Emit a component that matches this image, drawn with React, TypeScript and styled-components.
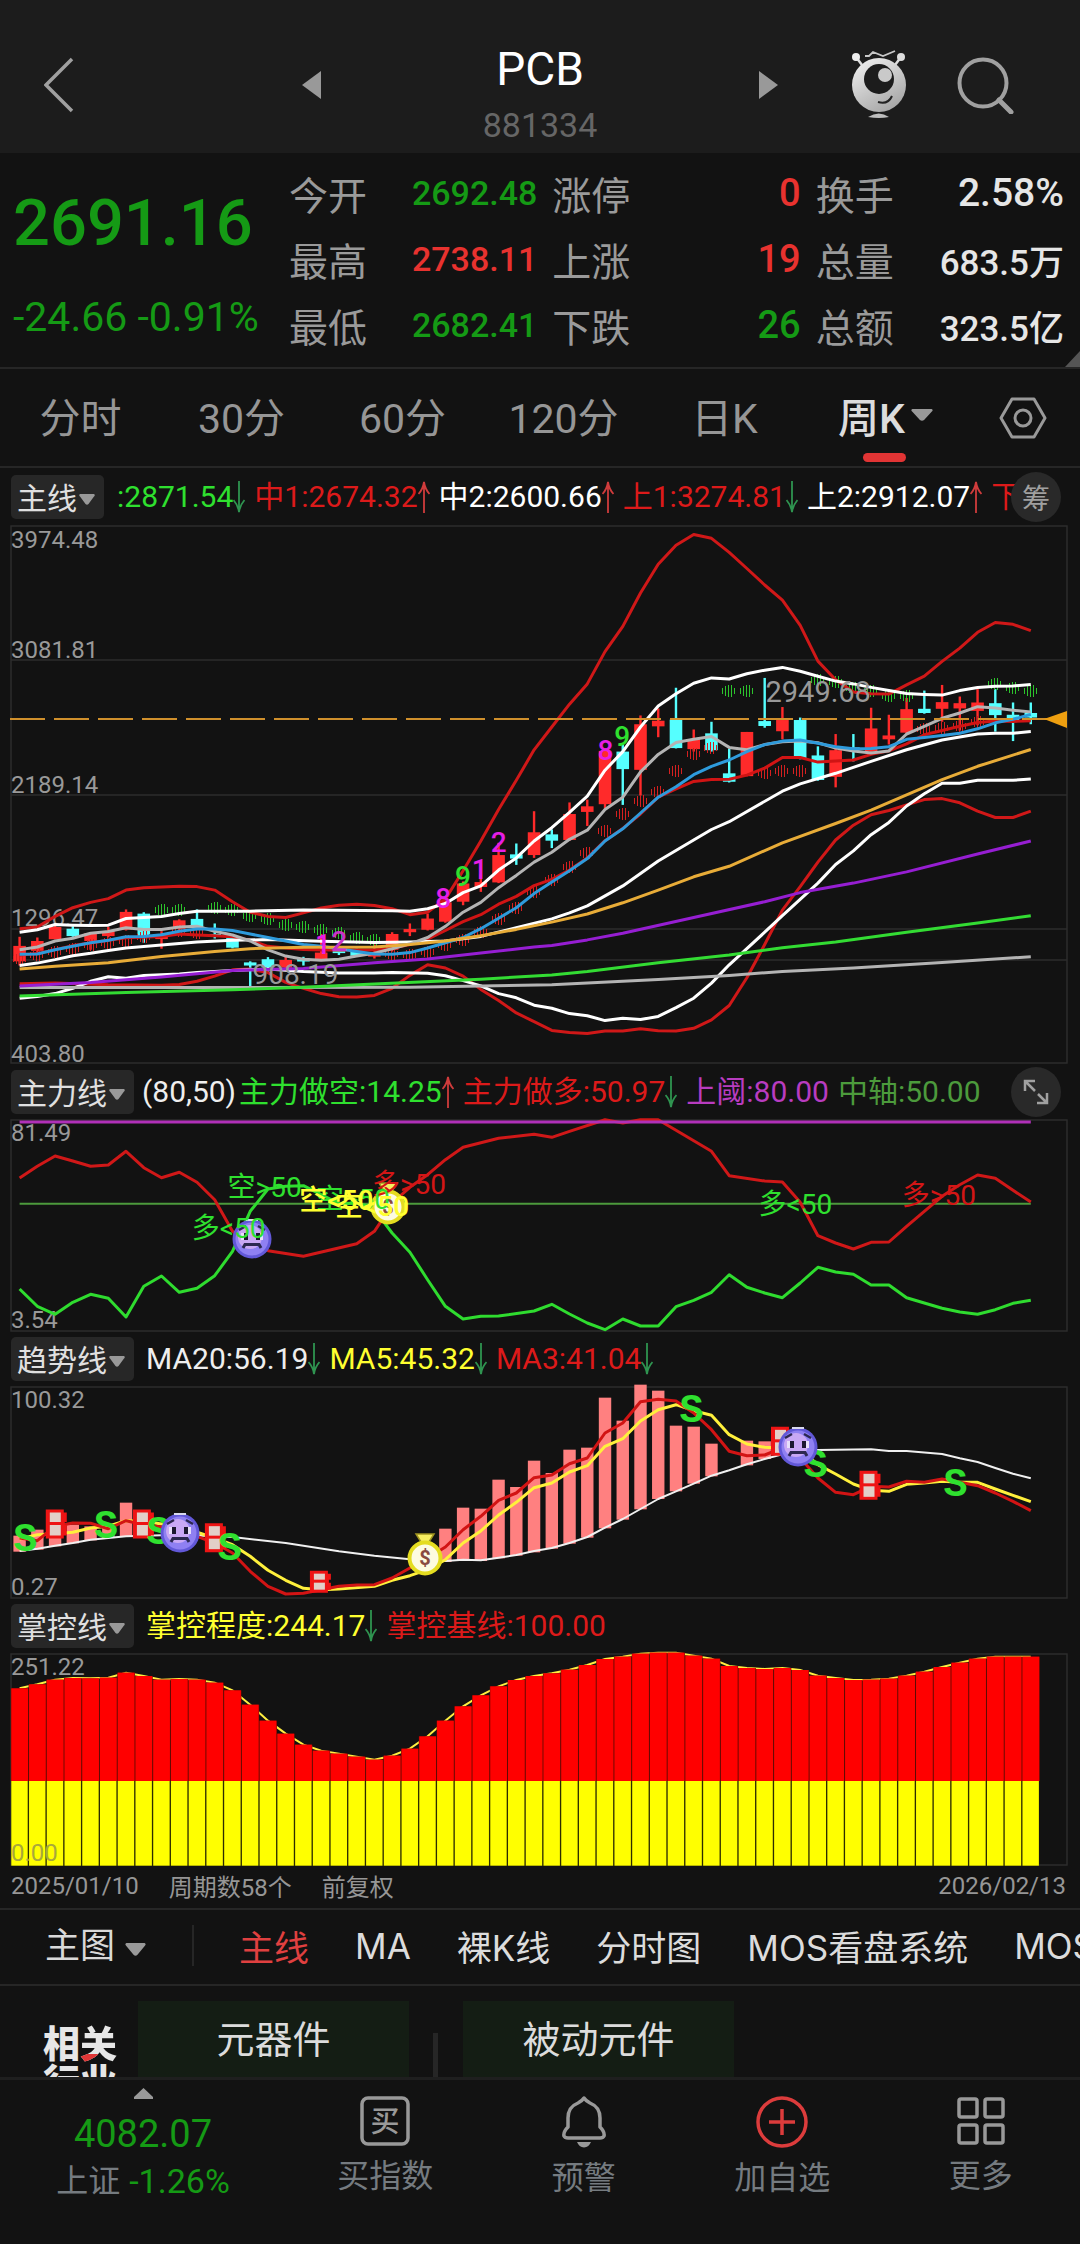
import React from "react";
import styled, { createGlobalStyle } from "styled-components";

const GlobalStyle = createGlobalStyle`
  * { box-sizing: border-box; }
  body {
    margin: 0;
    background: #121212;
    color: #d9d9d9;
    font-family: Roboto, "Noto Sans CJK SC", sans-serif;
    overflow-x: hidden;
  }
  button {
    margin: 0; padding: 0; border: 0; background: none;
    color: inherit; font: inherit; cursor: pointer;
  }
  svg { display: block; }
`;

const GREEN = "#159a15";
const RED = "#e8322f";
const WHITE = "#e6e6e6";

/* ---------- header ---------- */

const Page = styled.main`
  min-height: 100vh;
  display: flex;
  flex-direction: column;
  overflow: hidden;
`;

const TopBar = styled.header`
  height: 153px;
  padding: 17px 66px 0 44px;
  background: #1c1c1c;
  display: grid;
  grid-template-columns: 1fr 476px 1fr;
  align-items: center;
`;

const Switcher = styled.div`
  display: flex;
  justify-content: space-between;
  align-items: center;
  margin-left: 11px;
  margin-right: -11px;
`;

const Title = styled.h1`
  margin: 0;
  padding-top: 24px;
  display: flex;
  flex-direction: column;
  align-items: center;
  font-weight: 400;
  font-size: 46px;
  line-height: 56px;
  color: #fff;
`;

const Code = styled.small`
  font-size: 34px;
  color: #666;
`;

const Tools = styled.div`
  display: flex;
  justify-content: flex-end;
  align-items: center;
  gap: 50px;
`;

/* ---------- quote ---------- */

const Quote = styled.section`
  position: relative;
  height: 216px;
  padding: 7px 16px 0 13px;
  border-bottom: 2px solid #262626;
  display: grid;
  grid-template-columns: 261px repeat(3, 1fr);
  column-gap: 15px;
`;

const PriceBox = styled.div`
  padding-top: 16px;
  color: ${GREEN};
  white-space: nowrap;
`;

const Price = styled.div`
  font-size: 65px;
  line-height: 94px;
  font-weight: 500;
`;

const Change = styled.div`
  font-size: 41px;
  line-height: 94px;
`;

const StatList = styled.dl`
  margin: 0;
`;

const Stat = styled.div`
  height: 66px;
  display: flex;
  align-items: center;
  justify-content: space-between;
  white-space: nowrap;
`;

const StatName = styled.dt`
  font-size: 39px;
  color: #9a9a9a;
`;

const StatValue = styled.dd<{ $color: string; $size: number }>`
  margin: 0;
  font-size: ${(p) => p.$size}px;
  font-weight: 500;
  color: ${(p) => p.$color};
`;

const Corner = styled.svg`
  position: absolute;
  right: 0;
  bottom: 0;
`;

/* ---------- period tabs ---------- */

const Periods = styled.nav`
  height: 99px;
  display: flex;
  border-bottom: 2px solid #262626;
`;

const Period = styled.button<{ $on?: boolean }>`
  position: relative;
  flex: 1;
  padding-bottom: 5px;
  display: flex;
  align-items: center;
  justify-content: center;
  gap: 6px;
  font-size: 41px;
  color: ${(p) => (p.$on ? "#dcdcdc" : "#969696")};
  font-weight: ${(p) => (p.$on ? 500 : 400)};
  ${(p) =>
    p.$on &&
    `&::after {
      content: "";
      position: absolute;
      left: 50%;
      bottom: 4px;
      width: 43px;
      height: 9px;
      margin-left: -23px;
      border-radius: 5px;
      background: #e13434;
    }`}
`;

const Gear = styled.button`
  width: 114px;
  display: flex;
  align-items: center;
  justify-content: center;
`;

/* ---------- chart legends ---------- */

const Legend = styled.div<{ $h: number }>`
  height: ${(p) => p.$h}px;
  padding: 0 19px 0 11px;
  display: flex;
  align-items: center;
  gap: 8px;
`;

const Picker = styled.button`
  height: 44px;
  padding: 0 9px 2px 6px;
  flex: none;
  display: flex;
  align-items: center;
  gap: 2px;
  border-radius: 5px;
  background: #272727;
  font-size: 30px;
  color: #e0e0e0;
  & > svg { margin-top: 7px; }
`;

const Strip = styled.div<{ $pad?: number }>`
  flex: 1;
  min-width: 0;
  padding-left: ${(p) => p.$pad || 0}px;
  display: flex;
  align-items: center;
  gap: 9px;
  overflow: hidden;
  white-space: nowrap;
  font-size: 30px;
  line-height: 40px;
`;

const Reading = styled.span<{ $color: string }>`
  flex: none;
  display: flex;
  align-items: center;
  color: ${(p) => p.$color};
`;

const Params = styled.span`
  flex: none;
  margin-right: -6px;
  color: #eee;
`;

const Round = styled.button`
  width: 50px;
  height: 50px;
  flex: none;
  margin-left: -26px;
  position: relative;
  display: flex;
  align-items: center;
  justify-content: center;
  border-radius: 50%;
  background: #292929;
  font-size: 28px;
  color: #a0a0a0;
`;

const Plot = styled.svg`
  width: 100%;
  height: auto;
  overflow: visible;
`;

const Dates = styled.div`
  height: 43px;
  padding: 0 14px 2px 11px;
  display: flex;
  align-items: center;
  gap: 30px;
  font-size: 24px;
  color: #969696;
  & > :last-child { margin-left: auto; }
`;

/* ---------- indicator bar ---------- */

const Indicators = styled.nav`
  height: 78px;
  padding: 0 0 3px 45px;
  display: flex;
  align-items: center;
  border-top: 2px solid #262626;
  border-bottom: 2px solid #262626;
  font-family: Inter, "Noto Sans CJK SC", sans-serif;
  font-size: 35px;
  white-space: nowrap;
  overflow: hidden;
`;

const MainPick = styled.button`
  flex: none;
  display: flex;
  align-items: center;
  gap: 10px;
  padding-right: 46px;
  border-right: 2px solid #262626;
  margin-right: 45px;
  line-height: 41px;
  & > svg { margin-top: 7px; }
`;

const Choices = styled.div`
  display: flex;
  gap: 46px;
`;

const Choice = styled.button<{ $on?: boolean }>`
  flex: none;
  color: ${(p) => (p.$on ? "#e04040" : "#dcdcdc")};
`;

/* ---------- related sectors ---------- */

const Related = styled.section`
  height: 91px;
  padding: 15px 0 0 43px;
  display: flex;
  overflow: hidden;
`;

const RelatedTitle = styled.h2`
  margin: 0;
  width: 95px;
  padding-top: 26px;
  font-size: 37px;
  line-height: 38px;
  font-weight: 900;
  color: #e6e6e6;
`;

const Accent = styled.span`
  color: transparent;
  background:
    linear-gradient(115deg, #e03636 60%, transparent 60%) 0 30px / 24px 25px no-repeat,
    linear-gradient(#e6e6e6, #e6e6e6);
  -webkit-background-clip: text;
  background-clip: text;
`;

const Sector = styled.a`
  width: 271px;
  height: 120px;
  flex: none;
  padding-top: 10px;
  background: #141d14;
  color: #dcdcdc;
  font-size: 38px;
  line-height: 58px;
  text-align: center;
  text-decoration: none;
`;

const Split = styled.i`
  width: 5px;
  margin: 32px 25px 0 24px;
  background: #262626;
`;

/* ---------- bottom bar ---------- */

const BottomBar = styled.nav`
  flex: 1;
  min-height: 166px;
  border-top: 3px solid #1f1f1f;
  display: flex;
  align-items: flex-start;
`;

const IndexBox = styled.button`
  width: 286px;
  padding-top: 8px;
  display: flex;
  flex-direction: column;
  align-items: center;
`;

const IndexValue = styled.span`
  margin-top: 12px;
  font-size: 38px;
  line-height: 46px;
  color: ${GREEN};
`;

const IndexChange = styled.span`
  display: flex;
  gap: 9px;
  font-size: 34px;
  line-height: 48px;
  color: ${GREEN};
`;

const IndexName = styled.span`
  font-size: 32px;
  color: #757b80;
`;

const Action = styled.button`
  flex: 1;
  padding-top: 16px;
  display: flex;
  flex-direction: column;
  align-items: center;
  gap: 8px;
  font-size: 32px;
  line-height: 44px;
  color: #757b80;
`;

/* ---------- small drawings ---------- */

const Caret = ({ w = 16, h = 11 }: { w?: number; h?: number }) => (
  <svg width={w} height={h} viewBox="0 0 16 11" preserveAspectRatio="none">
    <path d="M1 0H15Q16.500 1 15 2.500L9.500 10Q8 11.500 6.500 10L1 2.500Q-0.500 1 1 0Z" fill="#999" />
  </svg>
);

const Arrow = ({ up }: { up?: boolean }) => (
  <svg width="12" height="34" viewBox="0 0 12 34" fill="none" stroke={up ? "#d03c3c" : "#2f9450"} strokeWidth="1.800">
    {up ? <path d="M6 33V2M0.500 14Q5 9 6 2Q7 9 11.500 14" /> : <path d="M6 1V32M0.500 20Q5 25 6 32Q7 25 11.500 20" />}
  </svg>
);

const Robot = () => (
  <svg width="56" height="70" viewBox="0 0 56 70">
    <defs>
      <linearGradient id="robot" x1="0" y1="0" x2="0.600" y2="1">
        <stop offset="0" stopColor="#f4f4f4" />
        <stop offset="1" stopColor="#a9a9a9" />
      </linearGradient>
    </defs>
    <path d="M14 6h4l4-4 10 4 12-5" fill="none" stroke="#c8c8c8" strokeWidth="1.800" />
    <path d="M5 7l6 8M50 7l-6 8" stroke="#ddd" strokeWidth="2.500" />
    <circle cx="5" cy="7" r="4" fill="#eee" />
    <circle cx="50" cy="7" r="4" fill="#ddd" />
    <circle cx="28" cy="35" r="27" fill="url(#robot)" />
    <circle cx="28" cy="29" r="15" fill="#1c1c1c" />
    <circle cx="34" cy="25" r="7" fill="#c9c9c9" />
    <path d="M27 52Q37 55 41 46" fill="none" stroke="#222" strokeWidth="2" />
    <path d="M17 67Q28 60 38 67Q28 69 17 67Z" fill="#bdbdbd" />
  </svg>
);

/* ---------- chart geometry ---------- */

const LEFT = 11;
const RIGHT = 1067;
const COUNT = 58;
const px = (i: number) => 19.6 + i * 17.74;
const lx = (u: number) => u / 2.904;

type Pt = [number, number];
type Scale = (v: number) => number;
const y1: Scale = (v) => (v - 14) / 2.851;
const y2: Scale = (v) => (v - 178) / 3;
const y3: Scale = (v) => (v - 169) / 3;
const y4: Scale = (v) => (v - 158) / 3;

const parse = (text: string): Pt[] =>
  text.trim().split(/\s+/).map((pair) => pair.split(":").map(Number) as Pt);

const Line = ({ data, y, color, width = 3 }: { data: string; y: Scale; color: string; width?: number }) => (
  <polyline
    fill="none"
    stroke={color}
    strokeWidth={width}
    strokeLinejoin="round"
    points={parse(data).map(([i, v]) => `${px(i).toFixed(1)},${y(v).toFixed(1)}`).join(" ")}
  />
);

const Frame = ({ h, lines = [] }: { h: number; lines?: number[] }) => (
  <g stroke="#2c2c2c" strokeWidth="1.500" fill="none">
    <rect x={LEFT} y="1" width={RIGHT - LEFT} height={h - 1} />
    {lines.map((y) => (
      <path key={y} d={`M${LEFT} ${y}H${RIGHT}`} />
    ))}
  </g>
);

const AxisText = ({ y, color = "#999", children }: { y: number; color?: string; children: string }) => (
  <text x="11" y={y} fontSize="24" fill={color}>{children}</text>
);

/* ---------- main chart data ---------- */

const upperRed = `0:1165 1:1160 2:1130 3:1105 4:1090 5:1079 6:1055 7:1048 8:1046 9:1044 10:1045 11:1055 12:1088 13:1118
14:1130 15:1133 16:1120 17:1106 18:1098 19:1095 20:1099 21:1108 22:1125 23:1118 24:1080 25:1000 26:915 27:825 28:742
29:655 30:590 31:525 32:467 33:375 34:303 35:208 36:126 37:72 38:41 39:52 40:92 41:138 42:185 43:228 44:300 45:402
46:455 47:490 48:495 49:496 50:470 51:445 52:403 53:365 54:320 55:292 56:297 57:315`;
const upperWhite = `0:1175 1:1168 2:1153 3:1155 4:1156 5:1155 6:1136 7:1133 8:1130 9:1122 10:1115 13:1115 16:1112 21:1114
22:1115 23:1108 24:1093 25:1062 26:1043 27:998 28:963 29:915 30:877 31:833 32:787 33:713 34:660 35:590 36:530 37:495
38:465 39:450 40:453 41:438 42:428 43:420 44:431 45:445 46:459 47:467 48:477 49:486 50:494 51:497 52:499 53:486
54:477 55:474 56:473 57:469`;
const grayLine = `0:1225 1:1217 2:1200 3:1192 4:1178 5:1173 6:1162 7:1167 8:1167 9:1160 10:1158 11:1172 12:1183 13:1200
14:1225 15:1243 16:1252 17:1255 18:1252 19:1243 20:1235 21:1222 22:1208 23:1190 24:1158 25:1118 26:1090 27:1048
28:1013 29:975 30:947 31:910 32:884 33:825 34:790 35:718 36:668 37:634 38:625 39:617 40:648 41:655 42:640 43:632
44:630 45:635 46:650 47:658 48:664 49:658 50:610 51:588 52:565 53:550 54:532 55:536 56:542 57:547`;
const blueLine = `0:1238 1:1237 2:1225 3:1215 4:1205 5:1198 6:1188 7:1187 8:1182 9:1172 10:1166 11:1166 12:1170 13:1180
14:1190 15:1200 16:1210 17:1215 18:1222 19:1230 20:1237 21:1238 22:1233 23:1220 24:1205 25:1190 26:1165 27:1135
28:1105 29:1065 30:1032 31:1000 32:965 33:915 34:880 35:835 36:790 37:760 38:726 39:702 40:684 41:660 42:640 43:630
44:627 45:636 46:646 47:652 48:651 49:646 50:625 51:620 52:614 53:608 54:595 55:578 56:568 57:554`;
const midRed = `0:1240 1:1236 3:1213 6:1191 8:1187 9:1180 10:1183 11:1185 12:1188 13:1198 14:1215 15:1220 16:1224 17:1226
20:1226 21:1221 22:1210 23:1195 24:1170 25:1145 26:1125 27:1095 28:1073 29:1042 30:1024 31:998 32:963 33:914 34:879
35:838 36:790 37:766 38:745 39:740 40:739 41:727 42:707 43:677 44:677 45:690 46:687 47:684 48:668 49:658 50:638
51:612 52:600 53:588 54:577 55:573 56:574 57:572`;
const midWhite = `0:1270 1:1263 2:1253 3:1242 4:1235 5:1227 6:1220 8:1211 10:1203 12:1198 14:1196 17:1201 20:1204 22:1203
24:1200 26:1187 28:1162 30:1137 31:1120 32:1100 34:1043 36:972 38:912 39:882 40:860 43:773 44:752 46:722 48:688
50:655 52:627 53:618 54:610 55:608 56:608 57:603`;
const orangeLine = `0:1280 2:1272 5:1262 8:1244 11:1230 13:1222 16:1218 20:1217 22:1210 24:1200 26:1185 28:1167 30:1146
32:1123 34:1091 36:1055 38:1017 40:987 43:920 46:865 48:827 52:740 54:702 57:654`;
const purpleLine = `0:1328 4:1318 8:1303 12:1284 16:1278 20:1262 23:1251 26:1234 29:1217 30:1213 32:1197 34:1178 38:1133
42:1088 44:1062 47:1035 50:1003 54:952 57:915`;
const greenLine = `0:1357 6:1347 12:1339 16:1332 20:1323 26:1309 30:1297 32:1287 36:1262 40:1240 43:1219 46:1203 50:1175
54:1149 57:1128`;
const longGray = `0:1333 10:1333 22:1332 26:1328 30:1325 36:1310 40:1298 43:1287 47:1277 52:1261 57:1245`;
const lowerWhite = `0:1363 1:1358 2:1350 3:1335 4:1315 5:1302 6:1306 7:1298 8:1296 9:1294 10:1290 12:1284 14:1280 16:1287
18:1291 20:1291 21:1290 23:1292 24:1299 25:1313 26:1328 27:1350 28:1362 29:1383 30:1392 31:1407 32:1413 33:1427
34:1420 35:1424 36:1415 37:1390 38:1363 39:1320 40:1268 42:1175 43:1128 45:1035 46:982 47:943 48:897 49:862 50:815
51:780 52:750 53:750 54:742 56:742 57:738`;
const lowerRed = `0:1322 2:1320 5:1325 8:1326 9:1324 10:1315 11:1300 12:1282 13:1280 14:1290 15:1318 16:1335 17:1350
18:1359 19:1360 20:1355 21:1335 22:1298 23:1268 24:1277 25:1300 26:1338 27:1370 28:1405 29:1430 30:1455 31:1461
32:1464 33:1457 34:1457 35:1450 36:1456 37:1457 38:1449 39:1425 40:1384 41:1305 42:1210 43:1112 44:1045 45:975
46:912 47:870 48:840 49:828 50:812 51:797 52:794 53:806 54:830 55:848 56:848 57:830`;

/* One row per week: r (up) or c (down), high, body top, body bottom, low. */
const candles = `r 1188 1214 1258 1270|r 1190 1200 1228 1232|r 1155 1160 1195 1195|c 1158 1165 1186 1188|r 1175 1178 1200 1225
|r 1160 1172 1186 1190|r 1110 1117 1168 1170|c 1118 1122 1190 1205|r 1172 1186 1189 1222|r 1138 1141 1165 1175
|c 1110 1137 1160 1162|c 1150 1180 1188 1193|c 1188 1190 1219 1221|c 1258 1261 1270 1338|c 1246 1252 1275 1290
|r 1240 1254 1276 1278|c 1245 1250 1258 1270|r 1180 1233 1254 1257|c 1220 1226 1232 1240|c 1222 1226 1242 1244
|r 1210 1236 1244 1250|r 1175 1180 1225 1230|r 1150 1166 1175 1186|r 1122 1136 1168 1170|r 1085 1090 1145 1148
|r 1030 1036 1088 1098|r 1010 1032 1046 1060|r 920 955 1033 1035|c 922 953 965 983|r 830 890 955 963
|c 882 896 914 935|r 805 838 912 914|r 797 816 832 872|r 650 658 810 822|c 640 660 710 812|r 557 582 712 785
|r 537 572 588 619|c 478 569 650 651|r 597 625 653 660|c 575 608 656 660|c 652 722 746 748|r 604 604 730 730
|c 450 573 587 592|r 533 570 602 625|c 563 570 678 682|c 645 671 741 743|r 610 656 732 762|c 610 648 656 688
|r 535 594 660 662|r 555 614 625 640|r 507 539 606 610|c 486 538 550 552|r 470 519 538 575|r 503 522 537 600
|r 482 520 544 585|c 482 522 556 603|c 520 555 572 630|c 520 550 563 582`
  .split("|")
  .map((row) => {
    const [kind, ...n] = row.trim().split(" ");
    return { up: kind === "r", n: n.map(Number) };
  });

const greenDots = `8:1112 9:1112 11:1105 12:1112 13:1130 14:1137 15:1153 16:1160 17:1168 18:1177 19:1192 20:1198 40:486
41:486 45:455 46:462 47:478 48:487 49:502 50:502 55:468 56:478 57:487`;
const redDots = `0:1250 1:1240 2:1232 3:1222 4:1212 5:1207 6:1200 7:1190 9:1172 10:1178 21:1238 22:1240 23:1230 24:1212
25:1197 26:1175 27:1137 28:1105 29:1060 30:1025 31:988 32:948 33:886 34:838 35:800 36:775 37:714 38:667 39:650 42:722
43:714 44:714 51:597 52:592 53:588 54:575`;

const stripes: Pt[] = [[-7, 3], [-4, 5], [-1, 6], [2, 6], [5, 3]];

const Dots = ({ data, color }: { data: string; color: string }) => (
  <path
    stroke={color}
    strokeWidth="1"
    d={parse(data)
      .map(([i, v]) =>
        stripes.map(([dx, r]) => `M${Math.round(px(i) + dx) + 0.5} ${Math.round(y1(v) - r)}v${r * 2}`).join("")
      )
      .join("")}
  />
);

const countdown: [string, number, number, string][] = [
  ["1", 915, 1238, "#e61ee6"],
  ["2", 962, 1228, "#c832c8"],
  ["8", 1264, 1106, "#e61ee6"],
  ["9", 1321, 1044, "#2fe02f"],
  ["1", 1370, 1022, "#e61ee6"],
  ["2", 1425, 945, "#e61ee6"],
  ["8", 1735, 684, "#e61ee6"],
  ["9", 1784, 645, "#2fe02f"],
];

const MainChart = () => (
  <Plot viewBox="0 0 1080 539">
    <Frame h={538} lines={[135, 270, 404, 435]} />
    <AxisText y={y1(80)}>3974.48</AxisText>
    <AxisText y={y1(393)}>3081.81</AxisText>
    <AxisText y={y1(777)}>2189.14</AxisText>
    <AxisText y={y1(1158)}>1296.47</AxisText>
    <AxisText y={y1(1545)}>403.80</AxisText>
    {candles.map(({ up, n }, i) => (
      <g key={i} fill={up ? "#ff2a2a" : "#55ffff"}>
        <rect x={px(i) - 1.2} y={y1(n[0])} width="2.400" height={(n[3] - n[0]) / 2.851} />
        <rect x={px(i) - 6.3} y={y1(n[1])} width="12.600" height={Math.max((n[2] - n[1]) / 2.851, 3)} />
      </g>
    ))}
    <Dots data={greenDots} color="#2cc42c" />
    <Dots data={redDots} color="#d42020" />
    <Line data={midRed} y={y1} color="#d01414" />
    <Line data={upperRed} y={y1} color="#d01818" />
    <Line data={lowerRed} y={y1} color="#d01818" />
    <Line data={upperWhite} y={y1} color="#fff" />
    <Line data={midWhite} y={y1} color="#fff" />
    <Line data={lowerWhite} y={y1} color="#fff" />
    <Line data={grayLine} y={y1} color="#b4b4b4" />
    <Line data={blueLine} y={y1} color="#2e9bdc" />
    <Line data={orangeLine} y={y1} color="#e8ac38" />
    <Line data={longGray} y={y1} color="#b4b4b4" />
    <Line data={purpleLine} y={y1} color="#961ed2" />
    <Line data={greenLine} y={y1} color="#33dc33" />
    <path d="M10 194H1040" stroke="#d0902c" strokeWidth="2" strokeDasharray="35 9" />
    <path d="M1025 194H1048" stroke="#d0902c" strokeWidth="2" />
    <path d="M1044 194L1067 186V203Z" fill="#ee9f10" />
    {countdown.map(([t, x, v, c]) => (
      <text key={`${t}${x}`} x={lx(x)} y={y1(v)} fontSize="28" fontWeight="500" fill={c}>{t}</text>
    ))}
    <text x={lx(733)} y={y1(1324)} fontSize="28" fill="#999">908.19</text>
    <text x={lx(2223)} y={y1(518)} fontSize="29" fill="#999">2949.68</text>
  </Plot>
);

/* ---------- force chart ---------- */

const forceRed = `0:355 1:320 2:289 3:304 4:320 5:316 6:275 7:324 8:354 9:338 10:368 11:420 12:515 13:555 14:573 16:590
19:552 20:515 20.5:475 21:430 22:383 23:345 24:300 25:263 27:236 29:224 30:233 31:215 33:180 34:190 35:180 36:180
37:212 39:275 40:348 42:364 43:367 44:428 45:528 46:550 47:568 48:548 49:547 50:500 51:455 52:410 53:375 54:346
55:356 56:392 57:427`;
const forceGreen = `0:688 1:740 2:764 3:728 4:704 5:716 6:772 7:680 8:649 9:698 10:686 11:648 12:575 13:455 14:388 15:380
16:378 17:405 18:432 19:430 20:445 20.5:485 21:520 22:578 23:660 24:740 25:778 26:770 27:769 29:754 30:734 31:763
32:790 33:810 34:778 35:799 36:799 37:741 38:722 39:698 40:645 41:683 42:700 43:714 44:670 45:623 46:637 47:644
48:676 49:676 50:714 51:730 52:746 53:757 54:764 55:750 56:731 57:722`;

const forceMarks: [string, number, number, string][] = [
  ["空>50", 661, 411, "#2fe02f"],
  ["多<50", 557, 535, "#2fe02f"],
  ["多>50", 1080, 403, "#d41616"],
  ["空>50", 917, 447, "#2fe02f"],
  ["空<50", 869, 452, "#ffff30"],
  ["空<50", 973, 468, "#ffff30"],
  ["多<50", 2203, 463, "#2fe02f"],
  ["多>50", 2619, 437, "#d41616"],
];

const Face = ({ x, y }: { x: number; y: number }) => (
  <g transform={`translate(${x} ${y})`}>
    <circle r="19.500" fill="#6258d8" />
    <circle r="16.500" fill="#8f80f2" />
    <circle cx="-2" cy="-2" r="12" fill="#c9a8f4" />
    <path d="M-6 -19H6" stroke="#d8d8ee" strokeWidth="2" />
    <path d="M-13 -9L-6 -13M13 -9L6 -13" stroke="#2c2850" strokeWidth="2.500" />
    <path d="M-9 -6V1M9 -6V1" stroke="#e8e0fa" strokeWidth="4" />
    <path d="M-6 -6V1M6 -6V1" stroke="#1c1830" strokeWidth="4" />
    <path d="M-9 9L-7 5.500H7L9 9" fill="none" stroke="#2c2850" strokeWidth="3" />
  </g>
);

const Coin = ({ x, y }: { x: number; y: number }) => (
  <g transform={`translate(${x} ${y})`}>
    <path d="M-9 -24H9L4 -16H-4Z" fill="#f6ee60" stroke="#a09420" strokeWidth="1.500" />
    <circle r="15.500" fill="#fdfbe0" stroke="#e4dc20" strokeWidth="4" />
    <text y="7" textAnchor="middle" fontSize="20" fontWeight="700" fill="#8a4a40">$</text>
  </g>
);

const ForceChart = () => (
  <Plot viewBox="0 0 1080 212">
    <Frame h={212} />
    <AxisText y={22}>81.49</AxisText>
    <AxisText y={209}>3.54</AxisText>
    <Line data="0:432 57:432" y={y2} color="#4c9a3c" width={2} />
    <Line data={forceRed} y={y2} color="#d01818" />
    <Line data={forceGreen} y={y2} color="#2fdc2f" />
    <Line data="0:187 57:187" y={y2} color="#b030b8" />
    <Face x={252} y={120} />
    <Coin x={388} y={88} />
    {forceMarks.map(([t, x, v, c]) => (
      <text key={`${t}${x}`} x={lx(x)} y={y2(v)} fontSize="28" fontWeight={c === "#ffff30" ? 500 : 400} fill={c}>{t}</text>
    ))}
  </Plot>
);

/* ---------- trend chart ---------- */

const trendBars = `0:618:666 1:600:660 2:572:650 3:585:641 4:590:632 5:582:625 6:519:620 7:562:620 24:597:697 25:534:694
26:537:694 27:450:686 28:472:678 29:393:668 30:430:657 31:360:642 32:354:624 33:204:596 34:273:570 35:165:539
36:183:508 37:288:485 38:291:462 39:342:440 41:333:407 42:335:388 43:330:378`
  .split(/\s+/)
  .map((t) => t.split(":").map(Number));
const trendWhite = `0:664 1:657 2:648 3:640 4:630 6:620 7:618 9:615 12:622 15:640 18:665 20:678 22:689 24:694 25:690 26:692
27:684 28:676 29:664 30:655 31:640 32:622 33:594 34:568 35:538 36:508 37:485 38:462 39:438 40:422 41:404 42:388
43:374 44:364 45:361 48:359 49:364 50:364 52:373 53:386 54:397 55:415 56:432 57:446`;
const trendYellow = `0:628 1:615 2:612 3:608 4:595 5:590 6:573 7:575 8:583 9:595 10:608 11:625 12:645 13:680 14:722 15:752
16:776 17:780 18:778 20:770 21:752 22:738 23:720 24:690 25:640 26:604 27:556 28:518 29:474 30:460 31:427 32:408
33:350 34:327 35:274 36:240 37:225 38:243 39:257 40:315 41:343 42:353 43:356 44:360 45:405 46:433 47:463 48:482
49:485 50:464 51:460 52:455 53:458 54:458 55:478 56:497 57:516`;
const trendRed = `0:625 1:633 2:590 3:580 4:581 5:597 6:573 7:585 8:592 9:600 10:620 11:640 12:670 13:725 14:770 15:793
16:791 17:780 18:770 19:766 20:765 21:745 22:715 23:685 24:652 25:600 26:560 27:512 28:490 29:444 30:436 31:402
32:385 33:310 34:280 35:216 36:209 37:214 38:250 39:300 40:365 41:378 42:376 43:355 44:385 45:445 46:488 47:495
48:470 49:472 50:455 51:458 52:448 53:458 54:468 55:490 56:515 57:543`;

const Sell = ({ x, v }: { x: number; v: number }) => (
  <text
    x={lx(x)}
    y={y3(v) + 14}
    textAnchor="middle"
    fontFamily="Liberation Mono, monospace"
    fontSize="40"
    fontWeight="700"
    fill="#2fe02f"
  >
    S
  </text>
);

const Buy = ({ x, v, h = 29 }: { x: number; v: number; h?: number }) => (
  <g transform={`translate(${lx(x) - 10} ${y3(v) - h / 2})`}>
    <path d={`M0 0H18V3H21V${h / 2 - 2}H19V${h / 2 + 1}H21V${h - 3}H18V${h}H0Z`} fill="#ee1414" />
    <rect x="4" y="3" width="11" height={h / 2 - 5} fill="#e2cfc8" />
    <rect x="4" y={h / 2 + 1} width="11" height={h / 2 - 4} fill="#e2cfc8" />
  </g>
);

const TrendChart = () => (
  <Plot viewBox="0 0 1080 212">
    <Frame h={212} />
    <AxisText y={22}>100.32</AxisText>
    <AxisText y={209}>0.27</AxisText>
    {trendBars.map(([i, a, b]) => (
      <rect key={i} x={px(i) - 6.2} y={y3(a)} width="12.400" height={(b - a) / 3} fill="#ff8080" />
    ))}
    <Line data={trendWhite} y={y3} color="#f0f0f0" width={2} />
    <Line data={trendYellow} y={y3} color="#fff03c" />
    <Line data={trendRed} y={y3} color="#d21414" />
    <Buy x={162} v={583} />
    <Buy x={415} v={583} />
    <Buy x={624} v={624} />
    <Buy x={929} v={756} h={22} />
    <Buy x={2268} v={335} />
    <Buy x={2525} v={467} />
    <Sell x={73} v={622} />
    <Sell x={308} v={582} />
    <Sell x={460} v={600} />
    <Sell x={667} v={648} />
    <Sell x={2008} v={235} />
    <Sell x={2369} v={400} />
    <Sell x={2775} v={457} />
    <Face x={180} y={147} />
    <Face x={798} y={61} />
    <Coin x={425} y={172} />
  </Plot>
);

/* ---------- control chart ---------- */

const control = [
  264, 252, 238, 233, 234, 232, 217, 227, 238, 236, 238, 247, 270, 313, 361, 400, 433, 451, 460, 469, 478, 466, 445, 408,
  361, 318, 285, 258, 239, 227, 219, 208, 194, 176, 169, 160, 157, 157, 166, 175, 197, 203, 206, 203, 209, 226, 233, 239,
  238, 235, 226, 214, 200, 187, 175, 169, 169, 169,
];

const ControlChart = () => (
  <Plot viewBox="0 0 1080 212">
    <Frame h={212} />
    <rect x={LEFT} y={y4(542)} width={COUNT * 17.72} height={y4(796) - y4(542)} fill="#2c2c00" />
    <polyline
      fill="none"
      stroke="#ffee40"
      strokeWidth="2"
      points={control.map((v, i) => `${px(i)},${y4(v)}`).join(" ")}
    />
    {control.map((v, i) => (
      <g key={i}>
        <rect x={px(i) - 8.8} y={y4(v)} width="17.740" height={y4(542) - y4(v)} fill="#7a0a00" />
        <rect x={px(i) - 8.3} y={y4(v)} width="16.700" height={y4(542) - y4(v)} fill="#ff0000" />
        <rect x={px(i) - 8.3} y={y4(542)} width="16.400" height={y4(796) - y4(542)} fill="#ffff00" />
      </g>
    ))}
    <AxisText y={22}>251.22</AxisText>
    <AxisText y={208} color="#a8a83c">0.00</AxisText>
  </Plot>
);

/* ---------- page ---------- */

type StatRow = [string, string, string, number];
const stats: StatRow[][] = [
  [["今开", "2692.48", GREEN, 34], ["最高", "2738.11", RED, 34], ["最低", "2682.41", GREEN, 34]],
  [["涨停", "0", RED, 38], ["上涨", "19", RED, 38], ["下跌", "26", GREEN, 38]],
  [["换手", "2.58%", WHITE, 39], ["总量", "683.5万", WHITE, 35], ["总额", "323.5亿", WHITE, 35]],
];

type Value = [string, string, ("up" | "down")?];
const LegendRow = ({ name, values, params, h = 55, pad, children }: {
  name: string; values: Value[]; params?: string; h?: number; pad?: number; children?: React.ReactNode;
}) => (
  <Legend $h={h}>
    <Picker>{name}<Caret /></Picker>
    <Strip $pad={pad}>
      {params && <Params>{params}</Params>}
      {values.map(([text, color, dir]) => (
        <Reading key={text} $color={color}>
          {text}
          {dir && <Arrow up={dir === "up"} />}
        </Reading>
      ))}
    </Strip>
    {children}
  </Legend>
);

const LIME = "#2fe02f";
const CRIMSON = "#dc1a1a";

export default function App() {
  return (
    <>
      <GlobalStyle />
      <Page>
        <TopBar>
          <button aria-label="返回">
            <svg width="30" height="56" viewBox="0 0 30 56" fill="none" stroke="#a0a0a0" strokeWidth="3.500">
              <path d="M28 2L2 28L28 54" />
            </svg>
          </button>
          <Switcher>
            <button aria-label="上一个">
              <svg width="19" height="28"><path d="M19 0V28L0 14Z" fill="#999" /></svg>
            </button>
            <Title>PCB<Code>881334</Code></Title>
            <button aria-label="下一个">
              <svg width="19" height="28"><path d="M0 0V28L19 14Z" fill="#999" /></svg>
            </button>
          </Switcher>
          <Tools>
            <button aria-label="助手"><Robot /></button>
            <button aria-label="搜索">
              <svg width="57" height="57" viewBox="0 0 57 57" fill="none" stroke="#a0a0a0">
                <circle cx="26" cy="26" r="23.500" strokeWidth="4" />
                <path d="M42 43L54 55" strokeWidth="5" strokeLinecap="round" />
              </svg>
            </button>
          </Tools>
        </TopBar>

        <Quote>
          <PriceBox>
            <Price>2691.16</Price>
            <Change>-24.66 -0.91%</Change>
          </PriceBox>
          {stats.map((col, c) => (
            <StatList key={c}>
              {col.map(([name, value, color, size]) => (
                <Stat key={name}>
                  <StatName>{name}</StatName>
                  <StatValue $color={color} $size={size}>{value}</StatValue>
                </Stat>
              ))}
            </StatList>
          ))}
          <Corner width="15" height="16"><path d="M15 0V16H0Z" fill="#555" /></Corner>
        </Quote>

        <Periods>
          {["分时", "30分", "60分", "120分", "日K"].map((t) => <Period key={t}>{t}</Period>)}
          <Period $on>周K<Caret w={22} h={12} /></Period>
          <Gear aria-label="设置">
            <svg width="48" height="42" viewBox="0 0 48 42" fill="none" stroke="#999" strokeWidth="3">
              <path d="M13 2H35L46 21L35 40H13L2 21Z" strokeLinejoin="round" />
              <circle cx="24" cy="21" r="8" />
            </svg>
          </Gear>
        </Periods>

        <LegendRow
          name="主线"
          h={57}
          pad={5}
          values={[
            [":2871.54", LIME, "down"],
            ["中1:2674.32", CRIMSON, "up"],
            ["中2:2600.66", "#fff", "up"],
            ["上1:3274.81", CRIMSON, "down"],
            ["上2:2912.07", "#fff", "up"],
            ["下", CRIMSON],
          ]}
        >
          <Round>筹</Round>
        </LegendRow>
        <MainChart />

        <LegendRow
          name="主力线"
          params="(80,50)"
          values={[
            ["主力做空:14.25", LIME, "up"],
            ["主力做多:50.97", CRIMSON, "down"],
            ["上阈:80.00", "#b83cc0"],
            ["中轴:50.00", "#4c9a3c"],
          ]}
        >
          <Round aria-label="展开">
            <svg width="26" height="26" viewBox="0 0 26 26" fill="none" stroke="#a0a0a0" strokeWidth="2.500">
              <path d="M2 12V2H12M2 2L12 12M24 14V24H14M24 24L15 15" />
            </svg>
          </Round>
        </LegendRow>
        <ForceChart />

        <LegendRow
          name="趋势线"
          pad={4}
          values={[
            ["MA20:56.19", "#eee", "down"],
            ["MA5:45.32", "#ffff30", "down"],
            ["MA3:41.04", CRIMSON, "down"],
          ]}
        />
        <TrendChart />

        <LegendRow
          name="掌控线"
          pad={4}
          values={[
            ["掌控程度:244.17", "#ffff30", "down"],
            ["掌控基线:100.00", CRIMSON],
          ]}
        />
        <ControlChart />

        <Dates>
          <time>2025/01/10</time>
          <span>周期数58个</span>
          <span>前复权</span>
          <time>2026/02/13</time>
        </Dates>

        <Indicators>
          <MainPick>主图<Caret w={21} h={13} /></MainPick>
          <Choices>
            <Choice $on>主线</Choice>
            {["MA", "裸K线", "分时图", "MOS看盘系统", "MOS"].map((t, i) => <Choice key={i}>{t}</Choice>)}
          </Choices>
        </Indicators>

        <Related>
          <RelatedTitle>相<Accent>关</Accent><br />行业</RelatedTitle>
          <Sector href="#components">元器件</Sector>
          <Split />
          <Sector href="#passive">被动元件</Sector>
        </Related>

        <BottomBar>
          <IndexBox>
            <svg width="19" height="11"><path d="M9.500 0L19 9V11H0V9Z" fill="#999" /></svg>
            <IndexValue>4082.07</IndexValue>
            <IndexChange><IndexName>上证</IndexName>-1.26%</IndexChange>
          </IndexBox>
          <Action>
            <svg width="50" height="50" viewBox="0 0 50 50">
              <rect x="2" y="2" width="46" height="46" rx="6" fill="none" stroke="#999" strokeWidth="3.500" />
              <text x="25" y="36" textAnchor="middle" fontSize="29" fontWeight="500" fill="#999">买</text>
            </svg>
            买指数
          </Action>
          <Action>
            <svg width="50" height="52" viewBox="0 0 50 52" fill="none" stroke="#999" strokeWidth="3.500">
              <path d="M25 2Q27 5 31 7Q41 11 41 22V31Q46 36 45 40Q44 42 41 42H9Q6 42 5 40Q4 36 9 31V22Q9 11 19 7Q23 5 25 2Z" strokeLinejoin="round" />
              <path d="M18 46H32Q30 51 25 51.500Q20 51 18 46Z" fill="#999" stroke="none" />
            </svg>
            预警
          </Action>
          <Action>
            <svg width="52" height="52" viewBox="0 0 52 52" fill="none" stroke="#dc3c3c" strokeWidth="3.500">
              <circle cx="26" cy="26" r="24" />
              <path d="M13 26H39M26 13V39" />
            </svg>
            加自选
          </Action>
          <Action>
            <svg width="50" height="50" viewBox="0 0 50 50" fill="none" stroke="#999" strokeWidth="3.500">
              <rect x="3" y="3" width="18" height="18" rx="2" />
              <rect x="29" y="3" width="18" height="18" rx="2" />
              <rect x="3" y="29" width="18" height="18" rx="2" />
              <rect x="29" y="29" width="18" height="18" rx="2" />
            </svg>
            更多
          </Action>
        </BottomBar>
      </Page>
    </>
  );
}
